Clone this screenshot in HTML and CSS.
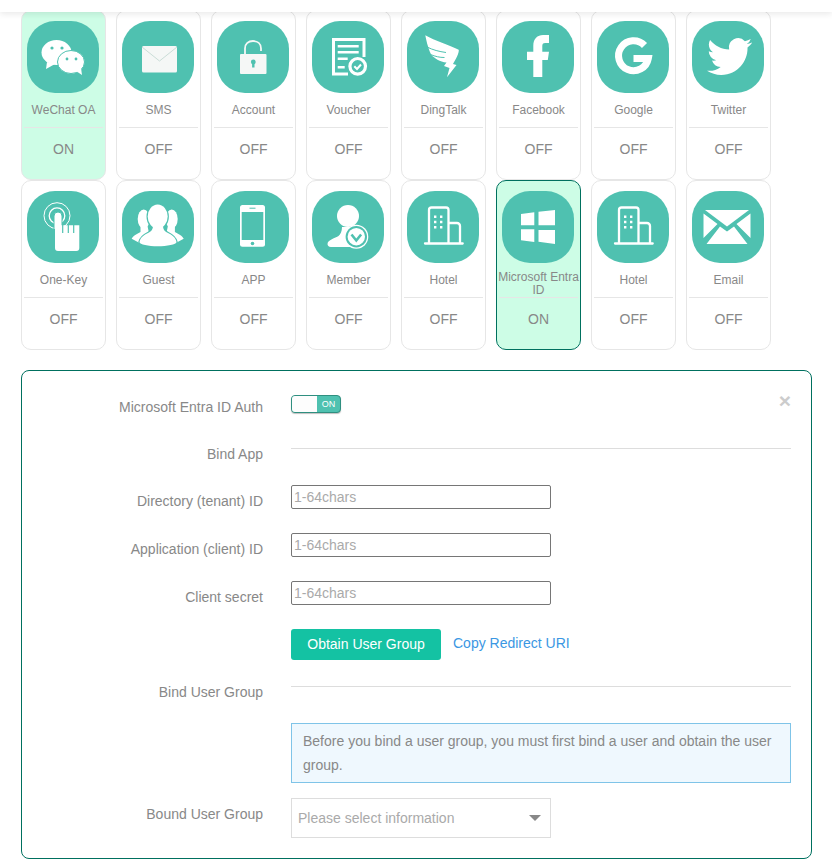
FILE: index.html
```html
<!DOCTYPE html>
<html lang="en">
<head>
<meta charset="utf-8">
<title>Authentication settings</title>
<link rel="stylesheet" href="styles.css">
</head>
<body>
<div class="topbar"></div>
<main class="page">
  <section class="cards">
    <article class="card on">
      <svg class="icon" viewBox="0 0 72 72"><ellipse class="w" cx="29.500" cy="31.500" rx="15" ry="12.500"/><path class="w" d="M20 41l-1 7 9-5z"/><ellipse class="w line" cx="44" cy="41" rx="13.500" ry="11.500"/><path class="w" d="M49 50l6 4-1-7z"/><circle class="t" cx="25" cy="27" r="1.600"/><circle class="t" cx="35" cy="27" r="1.600"/><circle class="t" cx="40" cy="38" r="1.400"/><circle class="t" cx="49" cy="38" r="1.400"/></svg>
      <div class="name">WeChat OA</div><div class="state">ON</div>
    </article>
    <article class="card">
      <svg class="icon" viewBox="0 0 72 72"><rect x="20" y="25" width="35" height="26.500" rx="1.500" fill="#f5f7f6"/><path d="M20 26l17.500 14L55 26" fill="none" stroke="#c9dcd8" stroke-width="1"/></svg>
      <div class="name">SMS</div><div class="state">OFF</div>
    </article>
    <article class="card">
      <svg class="icon" viewBox="0 0 72 72"><path d="M28 33V27.500C28 22.500 31.500 20 36 20s8 2.500 8 7.500V30" fill="none" stroke="#f5f7f6" stroke-width="1.800"/><rect x="23" y="33" width="26.500" height="20" rx="1" fill="#f5f7f6"/><circle class="t" cx="36.300" cy="41" r="2.400"/><rect class="t" x="35.100" y="41" width="2.400" height="5.500"/></svg>
      <div class="name">Account</div><div class="state">OFF</div>
    </article>
    <article class="card">
      <svg class="icon" viewBox="0 0 72 72"><path d="M36 53H21.500V18.500h30.500V36" fill="none" stroke="#fff" stroke-width="3"/><path d="M25.700 25.300h21M25.700 31.300h21M25.700 37.700h10M25.700 46.300h7" stroke="#fff" stroke-width="2.500"/><circle cx="45.700" cy="45.300" r="7.800" fill="#4fc1b0" stroke="#fff" stroke-width="3.200"/><path d="M42.300 45.200l2.700 2.800 4-4.500" fill="none" stroke="#fff" stroke-width="2"/></svg>
      <div class="name">Voucher</div><div class="state">OFF</div>
    </article>
    <article class="card">
      <svg class="icon" viewBox="0 0 72 72"><path class="w" d="M18.300 14.300C28 20 42 24 51.700 28.700 52.500 31 49 38 46 43l3.500 1L40 56.300 42.500 47 37 45l2.500-3.500C33 41 27 37 24.500 34 22 30 19.500 21 18.300 14.300z"/><path d="M20 26c6 3 12 4.500 19 5.500M23.500 33.500c5 2 9 3 14 3" fill="none" stroke="#4fc1b0" stroke-width="1"/></svg>
      <div class="name">DingTalk</div><div class="state">OFF</div>
    </article>
    <article class="card">
      <svg class="icon" viewBox="0 0 72 72"><path class="w" d="M31.300 56V39H25v-8.300h6.300v-6C31.300 17.500 35.500 14 41 14h6v8h-3.800c-2.200 0-2.900 1-2.900 3v5.700H47L45.800 39h-5.500v17z"/></svg>
      <div class="name">Facebook</div><div class="state">OFF</div>
    </article>
    <article class="card">
      <svg class="icon" viewBox="0 0 72 72"><path d="M47.500 24.500A15 15 0 1 0 51.300 37.500H36.500" fill="none" stroke="#fff" stroke-width="7"/></svg>
      <div class="name">Google</div><div class="state">OFF</div>
    </article>
    <article class="card">
      <svg class="icon" viewBox="0 0 72 72"><path class="w" transform="translate(15 13) scale(1.880)" d="M23.953 4.570a10 10 0 01-2.825.775 4.958 4.958 0 002.163-2.723c-.951.555-2.005.959-3.127 1.184a4.920 4.920 0 00-8.384 4.482C7.690 8.095 4.067 6.130 1.640 3.162a4.822 4.822 0 00-.666 2.475c0 1.710.870 3.213 2.188 4.096a4.904 4.904 0 01-2.228-.616v.060a4.923 4.923 0 003.946 4.827 4.996 4.996 0 01-2.212.085 4.936 4.936 0 004.604 3.417 9.867 9.867 0 01-6.102 2.105c-.390 0-.779-.023-1.170-.067a13.995 13.995 0 007.557 2.209c9.053 0 13.998-7.496 13.998-13.985 0-.210 0-.420-.015-.630A9.935 9.935 0 0024 4.590z"/></svg>
      <div class="name">Twitter</div><div class="state">OFF</div>
    </article>

    <article class="card">
      <svg class="icon" viewBox="0 0 72 72"><circle cx="30" cy="24.700" r="13" fill="none" stroke="#fff" stroke-width="1"/><circle cx="30" cy="24.700" r="7.800" fill="none" stroke="#fff" stroke-width="1.300"/><path d="M27 38V25a4 4 0 0 1 8 0v13" fill="#fff" stroke="#4fc1b0" stroke-width="1"/><path class="w" d="M28 25a3 3 0 0 1 6 0v9.300h18.300V57a3 3 0 0 1-3 3H31a3 3 0 0 1-3-3z"/><path d="M35.700 34v8M41.300 34v8M46.700 34v8" stroke="#4fc1b0" stroke-width="1.200"/></svg>
      <div class="name">One-Key</div><div class="state">OFF</div>
    </article>
    <article class="card">
      <svg class="icon" viewBox="0 0 72 72"><g id="guest-side"><ellipse class="w" cx="21.700" cy="28" rx="6" ry="9.500"/><path class="w" d="M18.500 35h7l3 14-10 3.500-8.800-4.700c1.300-3 5.300-4.800 8.800-6.800z"/></g><use href="#guest-side" transform="matrix(-1 0 0 1 71.400 0)"/><g class="guest-outline"><ellipse cx="35.700" cy="25.500" rx="10" ry="12"/><path d="M31 34c0 4-1 6-5 8s-7.500 4-8.500 9c0 2.500 9 4.300 18.200 4.300s18.800-1.800 18.800-4.300c-1-5-4.500-7-8.500-9s-5-4-5-8z"/></g><ellipse class="w" cx="35.700" cy="25.500" rx="10" ry="12"/><path class="w" d="M31 34c0 4-1 6-5 8s-7.500 4-8.500 9c0 2.500 9 4.300 18.200 4.300s18.800-1.800 18.800-4.300c-1-5-4.500-7-8.500-9s-5-4-5-8z"/></svg>
      <div class="name">Guest</div><div class="state">OFF</div>
    </article>
    <article class="card">
      <svg class="icon" viewBox="0 0 72 72"><rect class="w" x="23" y="14" width="25" height="41.700" rx="2.500"/><rect class="t" x="24.700" y="21" width="21.600" height="28"/><circle class="t" cx="35.500" cy="52.500" r="1.800"/><rect class="t" x="32.500" y="16.700" width="6" height="1"/></svg>
      <div class="name">APP</div><div class="state">OFF</div>
    </article>
    <article class="card">
      <svg class="icon" viewBox="0 0 72 72"><circle class="w" cx="36" cy="25" r="11"/><path class="w" d="M30 36h12l2 4 2 16H19c-2.500 0-3.500-1.500-3.500-3 0-4 8-6 11-8 2-1.500 3.500-5 3.500-9z"/><circle class="w" cx="44.300" cy="45.700" r="12"/><circle class="t" cx="44.300" cy="45.700" r="10.700"/><circle class="w" cx="44.300" cy="45.700" r="8.700"/><path d="M39.500 43.500l4.800 6 4.800-6" fill="none" stroke="#4fc1b0" stroke-width="2.600"/></svg>
      <div class="name">Member</div><div class="state">OFF</div>
    </article>
    <article class="card">
      <svg class="icon" viewBox="0 0 72 72"><use href="#hotel"/></svg>
      <div class="name">Hotel</div><div class="state">OFF</div>
    </article>
    <article class="card selected">
      <svg class="icon" viewBox="0 0 72 72"><path class="w" d="M19 23l13.300-1.700V34.300H19zM36.500 20.700L53 19v15.300H36.500zM19 38.300h13.300V51L19 49.300zM36.500 39H53v14l-16.500-2.300z"/></svg>
      <div class="name wrapped"><span class="name-text">Microsoft Entra ID</span></div><div class="state">ON</div>
    </article>
    <article class="card">
      <svg class="icon" viewBox="0 0 72 72"><use href="#hotel"/></svg>
      <div class="name">Hotel</div><div class="state">OFF</div>
    </article>
    <article class="card">
      <svg class="icon" viewBox="0 0 72 72"><path class="w" d="M13 19h44L35 35.500zM11.500 22.500L25.500 33 11.500 47zM58.500 22.500V47L44.500 33zM28 35.500l7 5 7-5L55.500 53h-41z"/></svg>
      <div class="name">Email</div><div class="state">OFF</div>
    </article>
  </section>

  <section class="panel">
    <button class="close" type="button">×</button>
    <div class="row row-switch">
      <label class="label">Microsoft Entra ID Auth</label>
      <div class="switch"><span class="knob"></span><span class="switch-on">ON</span></div>
    </div>
    <div class="row row-bind">
      <label class="label flush">Bind App</label>
      <hr class="rule">
    </div>
    <div class="row">
      <label class="label">Directory (tenant) ID</label>
      <input class="field" placeholder="1-64chars">
    </div>
    <div class="row">
      <label class="label">Application (client) ID</label>
      <input class="field" placeholder="1-64chars">
    </div>
    <div class="row">
      <label class="label">Client secret</label>
      <input class="field" placeholder="1-64chars">
    </div>
    <div class="row">
      <span class="label"></span>
      <div class="actions">
        <button class="primary" type="button">Obtain User Group</button>
        <a class="link">Copy Redirect URI</a>
      </div>
    </div>
    <div class="row">
      <label class="label flush">Bind User Group</label>
      <hr class="rule">
    </div>
    <div class="row row-info">
      <span class="label"></span>
      <div class="info">Before you bind a user group, you must first bind a user and obtain the user group.</div>
    </div>
    <div class="row row-select">
      <label class="label">Bound User Group</label>
      <div class="select"><span>Please select information</span><i class="caret"></i></div>
    </div>
  </section>
</main>
<svg class="defs" width="0" height="0"><defs><g id="hotel"><path d="M22 52V19a2.500 2.500 0 0 1 2.500-2.500H39a2.500 2.500 0 0 1 2.500 2.500v33M41.500 32H50a3 3 0 0 1 3 3v17M18 52.500h37.700" fill="none" stroke="#fff" stroke-width="2.300" stroke-linecap="round"/><path d="M27 24.500h2.400v2.400H27zM33 24.500h2.400v2.400H33zM27 29.800h2.400v2.400H27zM33 29.800h2.400v2.400H33zM27 35h2.400v2.400H27zM33 35h2.400v2.400H33z" fill="#fff"/></g></defs></svg>
</body>
</html>
```
FILE: styles.css
```css
* { box-sizing: border-box; }
html, body { margin: 0; padding: 0; background: #fff; }
body { font-family: "Liberation Sans", Arial, sans-serif; color: #888; font-size: 14px; overflow: hidden; height: 868px; }
.topbar { position: absolute; z-index: 2; top: 0; left: 0; width: 100%; height: 12px; background: #fff; box-shadow: 0 2px 6px rgba(0, 0, 0, .09); }
.page { padding: 10px 20px 0 21px; }
.cards { display: grid; grid-template-columns: repeat(8, 85px); grid-auto-rows: 170px; column-gap: 10px; }
.card { border: 1px solid #e6e6e6; border-radius: 10px; padding: 10px 2px 0; display: flex; flex-direction: column; align-items: stretch; background: #fff; }
.card.on { background: #cdfde6; }
.card.selected { background: #cdfde6; border-color: #00705f; }
.icon { display: block; width: 72px; height: 72px; margin: 0 3px; background: #4fc1b0; border-radius: 28px; flex: none; }
.icon .w, .w { fill: #fff; }
.icon .t, .t { fill: #4fc1b0; }
.line { stroke: #4fc1b0; stroke-width: 1; }
.guest-outline { fill: #4fc1b0; stroke: #4fc1b0; stroke-width: 2.400; }
.name { height: 35px; padding-top: 11px; font-size: 12px; line-height: 13px; text-align: center; border-bottom: 1px solid #e6e6e6; flex: none; }
.name.wrapped { padding-top: 8px; }
.name-text { display: block; margin: 0 -3px; }
.state { text-align: center; font-size: 14px; line-height: 20px; padding-top: 11px; }
.panel { position: relative; margin-top: 20px; width: 791px; height: 489px; border: 1px solid #00705f; border-radius: 8px; padding: 24px 20px 20px 0; display: flex; flex-direction: column; gap: 22px; }
.close { position: absolute; top: 18px; right: 20px; padding: 0; border: 0; background: none; color: #ccc; font: bold 21px/24px "Liberation Sans", Arial, sans-serif; }
.row { display: grid; grid-template-columns: 241px 1fr; column-gap: 28px; align-items: start; }
.row-switch { margin-bottom: 5px; }
.row-bind { margin-bottom: -1px; }
.row-info { margin-top: -1px; }
.row-select { margin-top: -7px; }
.label { display: block; text-align: right; line-height: 20px; margin-top: 6px; color: #888; }
.row-switch .label { margin-top: 2px; }
.label.flush { margin-top: 0; }
.rule { margin: 4px 0 0; border: 0; border-top: 1px solid #ddd; height: 0; }
.switch { position: relative; width: 50px; height: 18px; border: 1px solid #2f8f80; border-radius: 4px; background: #4fc1b0; box-shadow: 0 1px 1px rgba(0, 0, 0, .25); display: flex; align-items: center; }
.knob { width: 25px; height: 16px; background: #fdfdfd; border-radius: 3px 0 0 3px; }
.switch-on { flex: 1; text-align: center; color: #fff; font-size: 9px; line-height: 16px; }
.field { display: block; width: 260px; height: 24px; padding: 1px 2px; border: 1px solid #767676; border-radius: 2px; background: #fff; font: 14px "Liberation Sans", Arial, sans-serif; color: #888; }
.field::placeholder { color: #aaa; opacity: 1; }
.actions { display: flex; align-items: center; gap: 12px; height: 31px; }
.primary { width: 150px; height: 31px; padding: 0 0 2px; border: 0; border-radius: 3px; background: #14c2a3; color: #fff; font: 14px "Liberation Sans", Arial, sans-serif; }
.link { color: #3b97e3; line-height: 26px; margin-bottom: 3px; }
.info { height: 60px; padding: 5px 11px; border: 1px solid #7fc4e8; background: #eff8fe; line-height: 24px; color: #888; }
.select { width: 260px; height: 40px; border: 1px solid #ddd; padding: 0 9px 0 6px; display: flex; align-items: center; justify-content: space-between; color: #aaa; }
.caret { width: 0; height: 0; border-left: 6px solid transparent; border-right: 6px solid transparent; border-top: 6px solid #888; }
.defs { position: absolute; }
```
